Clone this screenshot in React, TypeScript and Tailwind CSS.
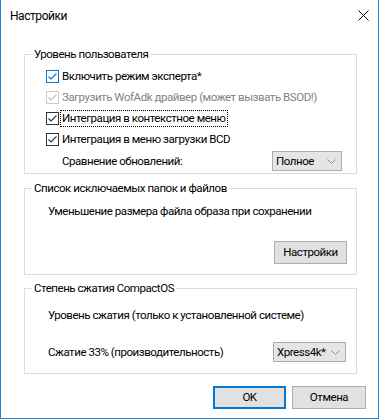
import React from 'react';

const font = { fontFamily: 'Roboto, "Liberation Sans", sans-serif' };

type CheckProps = { label: string; variant?: 'hover' | 'disabled' | 'normal'; focused?: boolean };

const CheckRow: React.FC<CheckProps> = ({ label, variant = 'normal', focused }) => {
  const box =
    variant === 'hover' ? 'border-[#0078d7]' : variant === 'disabled' ? 'border-[#cccccc]' : 'border-[#333333]';
  const mark = variant === 'hover' ? '#0078d7' : variant === 'disabled' ? '#bcbcbc' : '#333333';
  return (
    <div className="flex h-[21px] items-center">
      <span className={`flex h-[13px] w-[13px] shrink-0 items-center justify-center border bg-white ${box}`}>
        <svg width="11" height="11" viewBox="0 0 11 11">
          <path d="M1.5 5.5 L4 8 L9.5 2.5" fill="none" stroke={mark} strokeWidth="1.1" />
        </svg>
      </span>
      <span
        className={`ml-[2px] whitespace-nowrap px-[1px] leading-[15px] ${
          variant === 'disabled' ? 'text-[#838383]' : 'text-black'
        } ${focused ? 'outline outline-1 outline-dotted outline-black' : ''}`}
      >
        {label}
      </span>
    </div>
  );
};

const Combo: React.FC<{ value: string; width: string }> = ({ value, width }) => (
  <div
    className={`flex h-[20px] items-center justify-between border border-[#adadad] bg-[#e5e5e5] pl-[3px] pr-[5px] ${width}`}
  >
    <span className="whitespace-nowrap leading-[15px] text-black">{value}</span>
    <svg width="9" height="5" viewBox="0 0 9 5">
      <path d="M0.5 0.5 L4.5 4.5 L8.5 0.5" fill="none" stroke="#8a8a8a" strokeWidth="1" />
    </svg>
  </div>
);

const Button: React.FC<{ label: string; primary?: boolean; width: string }> = ({ label, primary, width }) => (
  <button
    className={`flex h-[23px] items-center justify-center bg-[#e1e1e1] text-black ${width} ${
      primary ? 'border-2 border-[#0078d7]' : 'border border-[#adadad]'
    }`}
  >
    {label}
  </button>
);

const Group: React.FC<{ title: string; className?: string; children: React.ReactNode }> = ({
  title,
  className,
  children,
}) => (
  <fieldset className={`border border-[#dcdcdc] ${className ?? ''}`}>
    <legend className="ml-[7px] whitespace-nowrap px-[2px] leading-[16px] text-black">{title}</legend>
    {children}
  </fieldset>
);

export default function App() {
  return (
    <div
      className="flex h-[419px] w-[379px] flex-col border-x border-b border-[#1883d7] bg-white text-[11.5px] tracking-[-0.45px] text-black"
      style={font}
    >
      {/* Title bar */}
      <div className="flex h-[31px] items-center justify-between pl-[9px] pr-[9px]">
        <span className="text-[12px] leading-[16px]">Настройки</span>
        <svg width="11" height="11" viewBox="0 0 11 11">
          <path d="M0.5 0.5 L10.5 10.5 M10.5 0.5 L0.5 10.5" stroke="#000" strokeWidth="1" />
        </svg>
      </div>

      <div className="flex flex-col pl-[23px] pr-[21px]">
        <Group title="Уровень пользователя" className="mt-[15px] h-[128px]">
          <div className="flex flex-col pl-[21px] pt-[4px]">
            <CheckRow label="Включить режим эксперта*" variant="hover" />
            <CheckRow label="Загрузить WofAdk драйвер (может вызвать BSOD!)" variant="disabled" />
            <CheckRow label="Интеграция в контекстное меню" focused />
            <CheckRow label="Интеграция в меню загрузки BCD" />
            <div className="flex h-[22px] items-center justify-between pr-[14px]">
              <span className="whitespace-nowrap pl-[16px] leading-[15px]">Сравнение обновлений:</span>
              <Combo value="Полное" width="w-[70px]" />
            </div>
          </div>
        </Group>

        <Group title="Список исключаемых папок и файлов" className="mt-[6px] h-[95px]">
          <div className="flex flex-col pl-[23px] pr-[9px] pt-[8px]">
            <span className="whitespace-nowrap leading-[15px]">Уменьшение размера файла образа при сохранении</span>
            <div className="mt-[22px] flex justify-end">
              <Button label="Настройки" width="w-[73px]" />
            </div>
          </div>
        </Group>

        <Group title="Степень сжатия CompactOS" className="mt-[5px] h-[94px]">
          <div className="flex flex-col pl-[23px] pr-[10px] pt-[12px]">
            <span className="whitespace-nowrap leading-[15px]">Уровень сжатия (только к установленной системе)</span>
            <div className="mt-[19px] flex items-center justify-between">
              <span className="whitespace-nowrap leading-[15px]">Сжатие 33% (производительность)</span>
              <Combo value="Xpress4k*" width="w-[73px]" />
            </div>
          </div>
        </Group>
      </div>

      <div className="mt-[12px] flex justify-end gap-[6px] pr-[12px]">
        <Button label="OK" primary width="w-[73px]" />
        <Button label="Отмена" width="w-[74px]" />
      </div>
    </div>
  );
}
